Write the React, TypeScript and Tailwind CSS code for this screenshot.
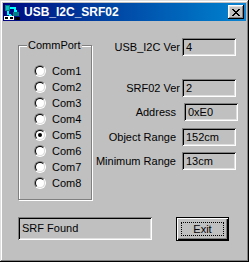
const PORTS = ['Com1', 'Com2', 'Com3', 'Com4', 'Com5', 'Com6', 'Com7', 'Com8']

const SUNKEN =
  'shadow-[inset_1px_1px_0_#808080,inset_-1px_-1px_0_#fff,inset_2px_2px_0_#000,inset_-2px_-2px_0_#dfdfdf]'

function Radio({ checked }: { checked?: boolean }) {
  return (
    <span className="flex w-[12px] h-[12px] rounded-full border border-t-[#808080] border-l-[#808080] border-r-white border-b-white">
      <span className="flex flex-1 items-center justify-center rounded-full border border-t-black border-l-black border-r-[#dfdfdf] border-b-[#dfdfdf] bg-white">
        {checked && <span className="w-[4px] h-[4px] rounded-full bg-black" />}
      </span>
    </span>
  )
}

function Field({ label, value, gap = 'ml-[2px]', extra = '' }: { label: string; value: string; gap?: string; extra?: string }) {
  return (
    <div className={`flex items-center h-[18px] ${extra}`}>
      <span className="text-[11px] leading-[14px] text-black">{label}</span>
      <div className={`${gap} w-[54px] h-[18px] flex items-center pl-[4px] text-[11px] text-black ${SUNKEN}`}>
        {value}
      </div>
    </div>
  )
}

function AppIcon() {
  return (
    <svg width="16" height="16" viewBox="0 0 16 16" shapeRendering="crispEdges">
      <rect x="1" y="1" width="5" height="6" fill="#008080" />
      <rect x="2" y="2" width="3" height="4" fill="#00c0c0" />
      <path d="M6 4 L11 4 L11 7 L13 7" stroke="#00ffff" strokeWidth="2" fill="none" />
      <path d="M4 7 L4 10 L8 12" stroke="#00ffff" strokeWidth="2" fill="none" />
      <rect x="9" y="8" width="6" height="4" fill="#008080" />
      <rect x="0" y="12" width="10" height="4" fill="#fff" />
      <rect x="1" y="13" width="3" height="2" fill="#000" />
      <rect x="6" y="13" width="3" height="2" fill="#000" />
      <rect x="11" y="13" width="5" height="3" fill="#000" />
    </svg>
  )
}

export default function App() {
  return (
    <div className="w-[249px] h-[262px] bg-[#c0c0c0] p-[3px] flex flex-col font-['Liberation_Sans',Arial,sans-serif] shadow-[inset_-1px_-1px_0_#000,inset_1px_1px_0_#dfdfdf,inset_-2px_-2px_0_#808080,inset_2px_2px_0_#fff]">
      {/* title bar */}
      <div className="h-[18px] flex items-center bg-linear-to-r from-[#000080] to-[#1084d0]">
        <span className="ml-[1px] flex">
          <AppIcon />
        </span>
        <span className="ml-[4px] text-white font-bold text-[12px] leading-[14px]">USB_I2C_SRF02</span>
        <button className="ml-auto mr-[2px] w-[16px] h-[14px] bg-[#c0c0c0] flex items-center justify-center shadow-[inset_-1px_-1px_0_#000,inset_1px_1px_0_#fff,inset_-2px_-2px_0_#808080,inset_2px_2px_0_#dfdfdf]">
          <svg width="8" height="7" viewBox="0 0 8 7" shapeRendering="crispEdges">
            <path d="M0 0h2v1h-2zM6 0h2v1h-2zM1 1h2v1h-2zM5 1h2v1h-2zM2 2h4v1h-4zM3 3h2v1h-2zM2 4h4v1h-4zM1 5h2v1h-2zM5 5h2v1h-2zM0 6h2v1h-2zM6 6h2v1h-2z" fill="#000" />
          </svg>
        </button>
      </div>

      {/* client area */}
      <div className="flex-1 flex flex-col">
        <div className="flex h-[180px]">
          <div className="relative ml-[15px] mt-[24px] w-[74px] h-[155px] border border-[#808080] shadow-[1px_1px_0_#fff,inset_1px_1px_0_#fff]">
            <span className="absolute -top-[8px] left-[8px] px-[1px] bg-[#c0c0c0] text-[11px] leading-[14px] text-black">CommPort</span>
            <div className="flex flex-col pt-[17px] pl-[15px]">
              {PORTS.map(p => (
                <div key={p} className="flex items-center h-[16px]">
                  <Radio checked={p === 'Com5'} />
                  <span className="ml-[6px] text-[11px] leading-[14px] text-black">{p}</span>
                </div>
              ))}
            </div>
          </div>

          <div className="ml-auto mr-[10px] mt-[17px] flex flex-col items-end">
            <Field label="USB_I2C Ver" value="4" />
            <Field label="SRF02 Ver" value="2" extra="mt-[23px]" />
            <Field label="Address" value="0xE0" gap="ml-[8px]" extra="mt-[6px] -mr-[2px]" />
            <Field label="Object Range" value="152cm" gap="ml-[6px]" extra="mt-[7px]" />
            <Field label="Minimum Range" value="13cm" gap="ml-[6px]" extra="mt-[6px]" />
          </div>
        </div>

        <div className="flex mt-[16px] ml-[15px]">
          <div className={`w-[134px] h-[23px] flex items-center pl-[4px] text-[11px] text-black ${SUNKEN}`}>SRF Found</div>
          <button className="ml-[24px] w-[53px] h-[24px] p-[4px] border border-black bg-[#c0c0c0] flex shadow-[inset_1px_1px_0_#fff,inset_-1px_-1px_0_#000,inset_-2px_-2px_0_#808080]">
            <span className="flex-1 flex items-center justify-center border border-dotted border-black text-[11px] text-black">Exit</span>
          </button>
        </div>
      </div>
    </div>
  )
}
